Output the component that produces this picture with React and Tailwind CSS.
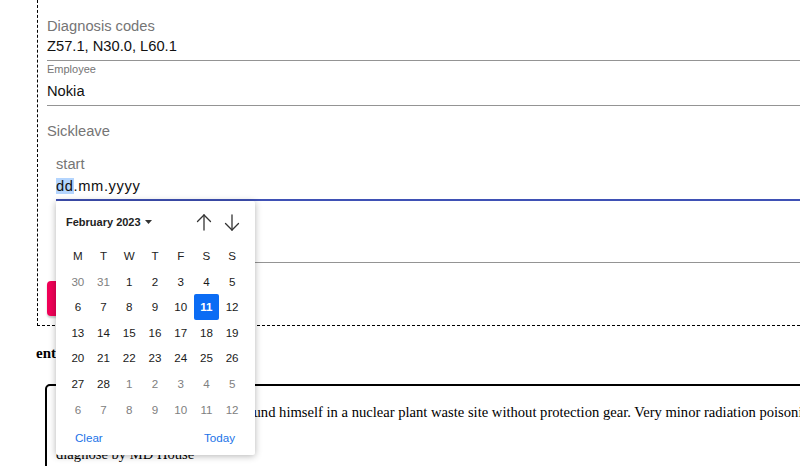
import React from 'react';

const weekdays = ['M', 'T', 'W', 'T', 'F', 'S', 'S'];

const days = [
    [30, 31, 1, 2, 3, 4, 5],
    [6, 7, 8, 9, 10, 11, 12],
    [13, 14, 15, 16, 17, 18, 19],
    [20, 21, 22, 23, 24, 25, 26],
    [27, 28, 1, 2, 3, 4, 5],
    [6, 7, 8, 9, 10, 11, 12],
];

function isOutside(row, day) {
    if (row === 0) return day > 20;
    if (row >= 4) return day < 20;
    return false;
}

function Arrow({ down }) {
    return (
        <svg width="16" height="19" viewBox="0 0 16 19" fill="none" stroke="#333" strokeWidth="1.3" strokeLinecap="round">
            {down ? (
                <>
                    <path d="M8 2 L8 17" />
                    <path d="M1.5 10.5 L8 17 L14.5 10.5" />
                </>
            ) : (
                <>
                    <path d="M8 2 L8 17" />
                    <path d="M1.5 8.5 L8 2 L14.5 8.5" />
                </>
            )}
        </svg>
    );
}

function DatePicker() {
    return (
        <div
            className="absolute left-[56px] top-[201px] w-[199px] h-[254px] bg-white rounded-[2px] shadow-[0_1px_7px_rgba(0,0,0,0.3)] text-[11.6px]"
            style={{ fontFamily: '"Liberation Sans", Arial, sans-serif' }}
        >
            <div className="h-[42px] flex items-center pl-[10px] pr-[15px]">
                <span className="font-bold text-[11px] text-[#222]">February 2023</span>
                <svg width="7" height="4" viewBox="0 0 7 4" className="ml-[4px]">
                    <path d="M0 0 L7 0 L3.5 4 Z" fill="#333" />
                </svg>
                <div className="ml-auto flex items-center gap-[12px]">
                    <Arrow />
                    <Arrow down />
                </div>
            </div>
            <div className="ml-[9px] w-[180px] grid grid-cols-7">
                {weekdays.map((w, i) => (
                    <div key={`w${i}`} className="h-[25.6px] flex items-center justify-center text-[#222]">
                        {w}
                    </div>
                ))}
                {days.map((row, r) =>
                    row.map((d, c) => {
                        const selected = r === 1 && d === 11;
                        return (
                            <div key={`${r}-${c}`} className="h-[25.6px] flex items-center justify-center">
                                {selected ? (
                                    <span className="w-[25px] h-[26px] flex items-center justify-center bg-[#0b6cf4] text-white font-bold rounded-[2px]">
                                        {d}
                                    </span>
                                ) : (
                                    <span className={isOutside(r, d) ? 'text-[#808080]' : 'text-[#1a1a1a]'}>{d}</span>
                                )}
                            </div>
                        );
                    })
                )}
            </div>
            <div className="h-[31px] flex items-center justify-between pl-[19px] pr-[20px] text-[#1a73e8]">
                <span>Clear</span>
                <span>Today</span>
            </div>
        </div>
    );
}

export default function App() {
    return (
        <div className="relative w-[800px] h-[466px] overflow-hidden bg-white">
            <div className="w-[1100px]" style={{ fontFamily: '"Liberation Sans", Arial, sans-serif' }}>
                <div className="ml-[37px] border-l border-b border-dashed border-black pl-[9px] pt-[17px] pb-[9px] text-[14.7px]">
                    <div className="h-[18px] leading-[18px] text-[#757575]">Diagnosis codes</div>
                    <div className="mt-[2px] h-[24px] leading-[18px] border-b border-[#949494] text-[#111]">
                        Z57.1, N30.0, L60.1
                    </div>
                    <div className="mt-[1px] h-[14px] leading-[14px] text-[11px] text-[#757575]">Employee</div>
                    <div className="h-[30px] pt-[6px] leading-[18px] border-b border-[#949494] text-[#111]">Nokia</div>
                    <div className="mt-[16px] h-[18px] leading-[18px] text-[#757575]">Sickleave</div>
                    <div className="pl-[9px]">
                        <div className="mt-[15px] h-[18px] leading-[18px] text-[#757575]">start</div>
                        <div className="mt-[4px] h-[24px] leading-[18px] tracking-[0.6px] border-b-2 border-[#3f51b5] text-[#111]">
                            <span className="bg-[#b4d5fe]">dd</span>.mm.yyyy
                        </div>
                        <div className="h-[62px] border-b border-[#949494] pt-[15px]">
                            <div className="h-[18px] leading-[18px] text-[#757575]">end</div>
                            <div className="mt-[4px] h-[18px] leading-[18px] text-[#111]">dd.mm.yyyy</div>
                        </div>
                    </div>
                    <button className="mt-[18px] h-[35px] w-[64px] rounded-[4px] bg-[#f00057] text-white text-[13px] font-medium shadow-[0_2px_2px_rgba(0,0,0,0.2)]">
                        ADD
                    </button>
                </div>
                <div style={{ fontFamily: '"Liberation Serif", "Times New Roman", serif' }}>
                    <h3 className="ml-[36px] mt-[18px] h-[18px] leading-[18px] font-bold text-[15px] text-black">entries</h3>
                    <div className="ml-[45px] mt-[22px] border-2 border-black rounded-[5px] pt-[17px] pb-[20px] pl-[9px] text-[14.6px] text-black">
                        <p className="pl-[48px] leading-[18px] whitespace-nowrap">
                            The patient mistakenly found himself in a nuclear plant waste site without protection gear. Very minor radiation poisoning.
                        </p>
                        <p className="mt-[24px] leading-[18px]">diagnose by MD House</p>
                    </div>
                </div>
            </div>
            <DatePicker />
        </div>
    );
}
